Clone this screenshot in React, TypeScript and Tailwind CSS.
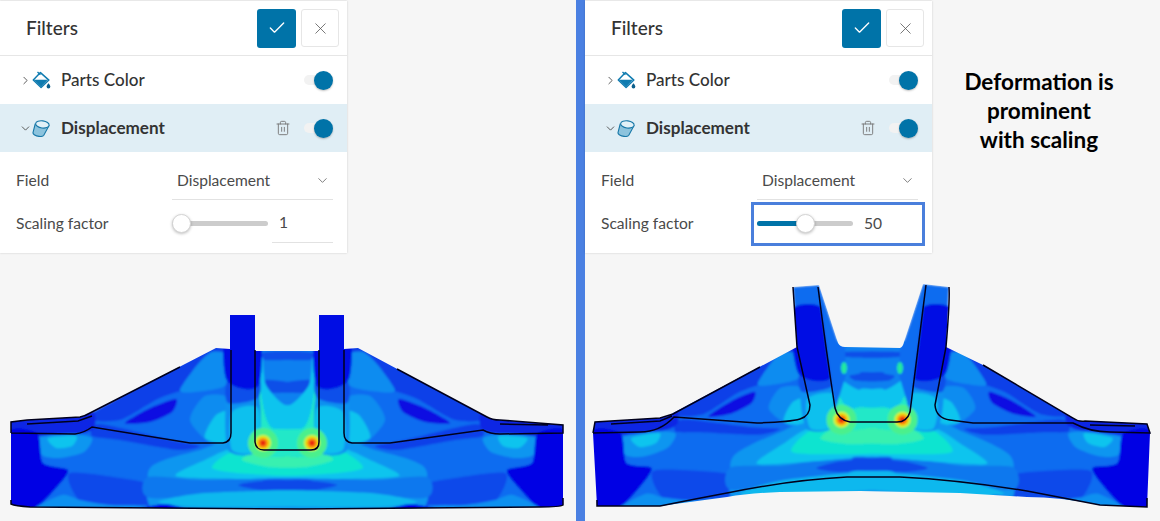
import { Check, ChevronDown, ChevronRight, Trash2, X } from "lucide-react";

type Point = [number, number];

// colour bands of the left half, in left-picture coordinates; mirrored about x=287.5
const bands: { color: string; points: Point[] }[] = [
  { color: "#0a40e8", points: [[216, 345], [232, 350], [228, 372], [200, 385], [160, 398], [120, 420], [92, 414]] },
  { color: "#0810e2", points: [[125, 423], [150, 408], [176, 399], [172, 412], [150, 422]] },
  { color: "#0a40e8", points: [[100, 424], [170, 440], [200, 446], [178, 450], [120, 440], [92, 436]] },
  { color: "#0a28e4", points: [[5, 418], [80, 414], [94, 412], [94, 428], [76, 434], [5, 436]] },
  { color: "#0a8cf0", points: [[198, 364], [212, 352], [228, 356], [226, 385], [195, 392], [180, 390]] },
  { color: "#0a8cf0", points: [[190, 420], [205, 396], [232, 400], [234, 445], [210, 443]] },
  { color: "#08c4ee", points: [[205, 438], [216, 415], [232, 412], [234, 444]] },
  { color: "#0a96f0", points: [[38, 438], [70, 434], [92, 438], [84, 452], [60, 458], [42, 455]] },
  { color: "#08c4ee", points: [[48, 438], [76, 436], [72, 446], [56, 448]] },
  { color: "#0000e4", points: [[5, 434], [37, 433], [43, 463], [68, 470], [57, 487], [33, 510], [5, 510]] },
  { color: "#0a48ea", points: [[70, 473], [120, 478], [148, 484], [150, 498], [148, 512], [95, 512], [75, 495]] },
  { color: "#0a90f0", points: [[36, 512], [62, 495], [80, 500], [110, 505], [150, 506], [150, 514]] },
  { color: "#0a96f0", points: [[148, 478], [152, 466], [170, 458], [200, 450], [228, 442], [310, 442], [310, 512], [160, 512]] },
  { color: "#08c4ee", points: [[176, 476], [205, 460], [236, 448], [310, 446], [310, 479], [240, 479]] },
  { color: "#10e4d0", points: [[212, 468], [238, 450], [310, 450], [310, 474], [250, 474]] },
  { color: "#38f0b0", points: [[242, 460], [258, 452], [310, 452], [310, 466], [270, 467]] },
  { color: "#0a78ee", points: [[148, 477], [200, 480], [240, 479], [310, 479], [310, 491], [240, 493], [150, 498]] },
  { color: "#0a48e8", points: [[238, 485], [262, 481], [310, 480], [310, 489], [262, 490]] },
  { color: "#08b8ee", points: [[158, 502], [205, 493], [310, 491], [310, 505], [200, 507]] },
  { color: "#0000e8", points: [[138, 509], [165, 504], [185, 510], [150, 514]] },
  // channel between the towers
  { color: "#0a80f0", points: [[250, 345], [310, 345], [310, 410], [250, 410]] },
  { color: "#0a50e8", points: [[272, 352], [310, 352], [310, 360], [276, 359]] },
  { color: "#0a50e8", points: [[278, 384], [310, 380], [310, 392], [283, 392]] },
  { color: "#08c4ee", points: [[252, 352], [262, 356], [266, 385], [285, 405], [310, 405], [310, 450], [250, 450]] },
  { color: "#20e8c8", points: [[255, 356], [260, 360], [262, 400], [272, 428], [310, 430], [310, 451], [255, 451]] },
  // tower
  { color: "#0a90f0", points: [[228, 392], [258, 392], [258, 450], [228, 450]] },
  { color: "#08c0ee", points: [[232, 412], [258, 408], [258, 450], [232, 450]] },
  { color: "#0a50ea", points: [[228, 380], [258, 375], [258, 398], [228, 403]] },
  { color: "#0010e4", points: [[226, 310], [259, 310], [259, 385], [226, 379]] },
];

const hotSpots = [
  { color: "#4cf08c", r: 15 },
  { color: "#d8f020", r: 8 },
  { color: "#ff9a10", r: 5.5 },
  { color: "#e82a10", r: 3 },
];

const clamp = (v: number) => Math.min(1, Math.max(0, v));

// bends the left-picture coordinates into the scaled picture (half, centred on 0)
function deform([x, y]: Point): Point {
  const u = 287.5 - x;
  const lift = 1 - clamp(u / 240);
  const depth = y >= 450 ? 1 - (0.4 * (y - 450)) / 58 : clamp((y - 352) / 98);
  const spread = (6 + 13 * clamp((443 - y) / 128)) * (u < 60 ? 1 : Math.max(0.15, 1 - (u - 60) / 120));
  return [u + spread, y - 28 * lift * depth];
}

function smooth(pts: Point[]) {
  const n = pts.length;
  let d = `M${pts[0][0]} ${pts[0][1]}`;
  for (let i = 0; i < n; i++) {
    const [p0, p1, p2, p3] = [pts[(i - 1 + n) % n], pts[i], pts[(i + 1) % n], pts[(i + 2) % n]];
    const c1 = [p1[0] + (p2[0] - p0[0]) / 8, p1[1] + (p2[1] - p0[1]) / 8];
    const c2 = [p2[0] - (p3[0] - p1[0]) / 8, p2[1] - (p3[1] - p1[1]) / 8];
    d += `C${c1[0]} ${c1[1]} ${c2[0]} ${c2[1]} ${p2[0]} ${p2[1]}`;
  }
  return d + "Z";
}

function Contours({ scaled }: { scaled: boolean }) {
  const place = ([x, y]: Point, side: number): Point => {
    if (!scaled) return [287.5 + side * (287.5 - x), y];
    const [u, v] = deform([x, y]);
    return [872 + side * u, v];
  };
  return (
    <>
      {bands.map((band, i) =>
        [-1, 1].map((side) => (
          <path
            key={`${i}-${side}`}
            d={smooth(band.points.map((p) => place(p, side)))}
            fill={band.color}
          />
        )),
      )}
      {hotSpots.map((spot) =>
        [-1, 1].map((side) => {
          const [cx, cy] = place([263, 443], side);
          return <circle key={`${spot.r}-${side}`} cx={cx} cy={cy} r={spot.r} fill={spot.color} />;
        }),
      )}
    </>
  );
}

function Simulation({
  id,
  viewBox,
  width,
  outline,
  lines,
  scaled,
  faces,
}: {
  id: string;
  viewBox: string;
  width: number;
  outline: string;
  lines: string;
  scaled: boolean;
  faces?: React.ReactNode;
}) {
  return (
    <svg className="block" width={width} height={268} viewBox={viewBox}>
      <defs>
        <clipPath id={id}>
          <path d={outline} />
        </clipPath>
        <filter id={`${id}-soft`} x="-5%" y="-5%" width="110%" height="110%">
          <feGaussianBlur stdDeviation="1.3" />
        </filter>
        <filter id={`${id}-line`} x="-5%" y="-5%" width="110%" height="110%">
          <feGaussianBlur stdDeviation="0.3" />
        </filter>
      </defs>
      <g clipPath={`url(#${id})`}>
        <g filter={`url(#${id}-soft)`}>
          <path d={outline} fill="#0a6cf0" />
          <Contours scaled={scaled} />
          {faces}
        </g>
      </g>
      <path d={lines} fill="none" stroke="#06061c" strokeWidth="1.5" filter={`url(#${id}-line)`} />
    </svg>
  );
}

function BucketIcon() {
  return (
    <svg width="19" height="19" viewBox="0 0 18 18" fill="none">
      <path d="M8 1.5 16 8.6 8.6 15.6 1.2 8.6Z" fill="#fff" stroke="#0f7bb0" strokeWidth="1.4" strokeLinejoin="round" />
      <path d="M1.8 8.4H15L8.6 15Z" fill="#0f7bb0" />
      <path d="M5.2 1 8 3.5" stroke="#0f7bb0" strokeWidth="1.3" />
      <path d="M15.6 11.6c1.2 1.6 1.8 2.4 1.8 3.2a1.8 1.8 0 0 1-3.6 0c0-.8.6-1.6 1.8-3.2Z" fill="#0b5f8c" />
    </svg>
  );
}

function CylinderIcon() {
  return (
    <svg width="18" height="18" viewBox="0 0 18 18" fill="none">
      <path d="M3.2 5 1 13.6c-.3 1.7 2.6 3.4 6 3.8 2.6.3 4.2-.2 4.8-1.2L16.8 7 3.2 5Z" fill="#8cc3dd" stroke="#1878a8" strokeWidth="1.1" />
      <ellipse cx="10.4" cy="5.4" rx="6.8" ry="3.6" transform="rotate(8 10.4 5.4)" fill="#e2f1f8" stroke="#1878a8" strokeWidth="1.1" />
    </svg>
  );
}

function Toggle() {
  return (
    <span className="flex items-center">
      <span className="h-[10px] w-[18px] rounded-l-full bg-[#f2f2f2]" />
      <span className="-ml-[8px] h-[19px] w-[19px] rounded-full bg-[#0073a8] shadow-[0_1px_2px_rgba(0,0,0,0.25)]" />
    </span>
  );
}

function FilterRow({
  label,
  open,
  icon,
}: {
  label: string;
  open?: boolean;
  icon: React.ReactNode;
}) {
  return (
    <div className={`flex h-[48px] items-center pr-[14px] ${open ? "bg-[#e0eef5]" : "bg-white"}`}>
      <span className="flex w-[32px] justify-end">
        {open ? (
          <ChevronDown size={13} strokeWidth={1.6} className="text-[#444]" />
        ) : (
          <ChevronRight size={13} strokeWidth={1.6} className="text-[#444]" />
        )}
      </span>
      <span className="flex w-[29px] items-center">{icon}</span>
      <span className={`flex-1 text-[17.1px] text-[#333] ${open ? "font-bold" : "font-medium"}`}>{label}</span>
      {open && <Trash2 size={16} strokeWidth={1.4} className="mr-[13px] text-[#777]" />}
      <Toggle />
    </div>
  );
}

function FilterPanel({ value, percent, boxed }: { value: string; percent: number; boxed?: boolean }) {
  return (
    <section className="mt-[1px] h-[252px] w-[347px] shrink-0 bg-white shadow-[0_0_2px_rgba(0,0,0,0.18)]">
      <header className="flex h-[55px] items-center border-b border-[#e6e6e6] pl-[26px] pr-[8px]">
        <h2 className="flex-1 text-[19px] font-medium text-[#333]">Filters</h2>
        <button className="flex h-[39px] w-[39px] items-center justify-center rounded-[3px] bg-[#0073a8]">
          <Check size={20} strokeWidth={1.6} className="text-white" />
        </button>
        <button className="ml-[5px] flex h-[38px] w-[38px] items-center justify-center rounded-[3px] border border-[#e6e6e6]">
          <X size={19} strokeWidth={1} className="text-[#555]" />
        </button>
      </header>
      <FilterRow label="Parts Color" icon={<BucketIcon />} />
      <FilterRow label="Displacement" open icon={<CylinderIcon />} />
      <div className="pl-[16px] pr-[14px]">
        <div className="flex h-[48px] items-center">
          <span className="w-[156px] pt-[9px] text-[15.6px] text-[#4a4a4a]">Field</span>
          <div className="flex h-[48px] flex-1 items-center justify-between self-stretch border-b border-[#e2e2e2] pl-[5px] pr-[3px] pt-[10px]">
            <span className="text-[15.6px] text-[#4a4a4a]">Displacement</span>
            <ChevronDown size={15} strokeWidth={1.2} className="text-[#555]" />
          </div>
        </div>
        <div className="flex h-[43px] items-center">
          <span className="w-[156px] pt-[4px] text-[15.6px] text-[#4a4a4a]">Scaling factor</span>
          <div className="relative flex h-[43px] flex-1 items-center pt-[4px]">
            <div className="relative h-[5px] w-[96px] rounded-full bg-[#cccccc]">
              <div className="h-full rounded-full bg-[#0073a8]" style={{ width: `${percent}%` }} />
              <span
                className="absolute top-[-7px] h-[19px] w-[19px] rounded-full border border-[#d5d5d5] bg-white shadow-[0_1px_3px_rgba(0,0,0,0.25)]"
                style={{ left: Math.max(0, (96 * percent) / 100 - 9.5) }}
              />
            </div>
            <div
              className={`ml-[4px] flex h-[39px] flex-1 items-center pl-[7px] text-[15.6px] text-[#4a4a4a] ${boxed ? "" : "border-b border-[#e2e2e2]"}`}
            >
              {value}
            </div>
            {boxed && (
              <div className="absolute left-[-6px] right-[-7px] top-[2px] h-[44px] border-[3px] border-[#4a7fdc]" />
            )}
          </div>
        </div>
      </div>
    </section>
  );
}

const originalOutline =
  "M11 422L27 420L80 417Q85 416 90 413L216 348L230 349L230 315L255 315L255 351L319 351L319 315L344 315L344 349L358 348L487 417Q492 420 500 420L563 425L563 505Q560 507 540 507L300 509L30 507Q15 506 11 504Z";
const originalLines =
  "M11 433V422L27 420L80 417Q85 416 90 413L180 367M27 424L78 421L92 416M11 433L75 434Q84 433 92 427L190 443H223Q231 442 231 433V350M255 350V442Q256 450 264 450H311Q319 450 319 442V350M344 350V433Q344 442 352 443H390L483 430Q490 434 500 434L563 433V425L500 420Q492 420 487 417L397 369M500 424L548 425M11 500V504Q15 506 30 507L300 509L540 507Q560 507 563 505V498";

const scaledOutline =
  "M595 422L660 418Q668 417 673 413L797 347L793 287L819 285L838 343Q840 347 845 347L900 348Q903 347 904 342L923 284L949 287L946 347L983 365L1073 418Q1078 422 1085 421L1147 424L1150 433L1147 507L1100 505Q1060 497 1027 497L960 493L860 491L780 492Q750 493 727 497L660 506L597 506L593 433Z";
const scaledLines =
  "M593 433L595 422L660 418L673 414L760 367M793 287L797 347L810 405Q810 416 800 419Q790 422 757 423L674 417Q660 432 640 432L593 433M611 424L660 421L672 416M818 287Q826 350 835 408Q838 420 850 422H897Q907 422 910 412L926 285M949 287Q950 300 946 347L935 405Q936 418 950 420L973 423H1073Q1090 432 1110 432L1150 433L1147 424L1085 421Q1078 422 1073 418L983 365M1090 425L1135 426M597 500V506H660Q700 498 727 493Q790 480 847 477H900Q960 480 1027 491L1100 505L1147 507V498";

export default function App() {
  return (
    <div className="flex h-[521px] w-[1160px] overflow-hidden bg-[#f6f6f6] font-[Lato,sans-serif]">
      <div className="w-[576px] shrink-0">
        <FilterPanel value="1" percent={0} />
        <Simulation
          id="original"
          viewBox="0 253 576 268"
          width={576}
          outline={originalOutline}
          lines={originalLines}
          scaled={false}
        />
      </div>
      <div className="w-[9px] shrink-0 bg-[#4a80e2]" />
      <div className="w-[575px] shrink-0">
        <div className="flex h-[253px]">
          <FilterPanel value="50" percent={50} boxed />
          <p className="ml-[31px] mt-[67px] w-[152px] text-center text-[22.5px] font-bold leading-[29px] text-black">
            Deformation is
            <br />
            prominent
            <br />
            with scaling
          </p>
        </div>
        <Simulation
          id="scaled"
          viewBox="585 253 575 268"
          width={575}
          outline={scaledOutline}
          lines={scaledLines}
          scaled
          faces={
            <>
              <path d="M818 287L838 343L845 347L846 375L835 410Z" fill="#0a6cf0" />
              <path d="M926 285L904 342L900 348L899 375L910 412Z" fill="#0a6cf0" />
              <ellipse cx="844" cy="368" rx="3" ry="6" fill="#20e8a0" />
              <ellipse cx="900" cy="368" rx="3" ry="6" fill="#20e8a0" />
            </>
          }
        />
      </div>
    </div>
  );
}
